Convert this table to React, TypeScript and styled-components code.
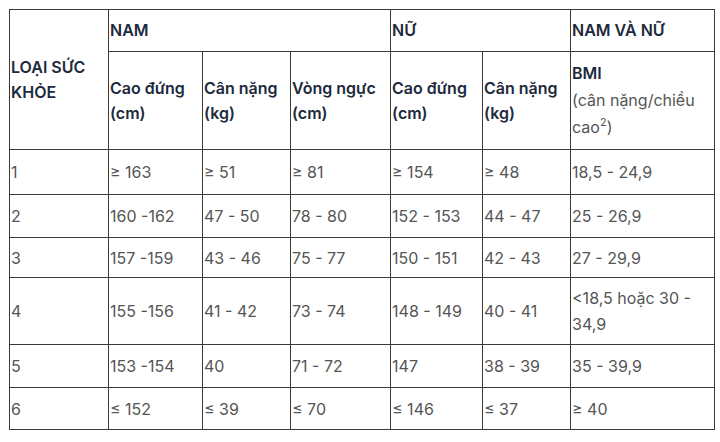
import React from "react";
import styled, { createGlobalStyle } from "styled-components";

const Global = createGlobalStyle`
  html, body { margin: 0; padding: 0; background: #ffffff; }
  body { font-family: Inter, "Noto Sans", sans-serif; }
`;

const Page = styled.div`
  padding: 9px 0 0 9px;
`;

const Table = styled.table`
  border-collapse: collapse;
  table-layout: fixed;
  width: 705px;
  font-family: Inter, "Noto Sans", sans-serif;
  font-size: 16px;
  color: #555555;
`;

const Row = styled.tr<{ $h: number }>`
  height: ${(p) => p.$h}px;
`;

const Cell = styled.td<{ $lh?: number }>`
  border: 1px solid #3a3a3a;
  padding: 0 2px 0 1px;
  vertical-align: middle;
  text-align: left;
  line-height: ${(p) => p.$lh ?? 25}px;
  font-weight: 400;
  color: #555555;
  overflow: hidden;
`;

const Head = styled(Cell).attrs({ as: "th" })`
  font-weight: 600;
  color: #1d2a3d;
`;

const Bold = styled.strong`
  font-weight: 600;
  color: #1d2a3d;
`;

const Sup = styled.sup`
  font-size: 11px;
  line-height: 0;
  vertical-align: 7px;
`;

const widths = [99, 94, 88, 100, 92, 88, 144];

const rows: { h: number; cells: React.ReactNode[] }[] = [
  { h: 45, cells: ["1", "≥ 163", "≥ 51", "≥ 81", "≥ 154", "≥ 48", "18,5 - 24,9"] },
  { h: 43, cells: ["2", "160 -162", "47 - 50", "78 - 80", "152 - 153", "44 - 47", "25 - 26,9"] },
  { h: 40, cells: ["3", "157 -159", "43 - 46", "75 - 77", "150 - 151", "42 - 43", "27 - 29,9"] },
  { h: 67, cells: ["4", "155 -156", "41 - 42", "73 - 74", "148 - 149", "40 - 41", "<18,5 hoặc 30 - 34,9"] },
  { h: 43, cells: ["5", "153 -154", "40", "71 - 72", "147", "38 - 39", "35 - 39,9"] },
  { h: 42, cells: ["6", "≤ 152", "≤ 39", "≤ 70", "≤ 146", "≤ 37", "≥ 40"] },
];

export default function App() {
  return (
    <>
      <Global />
      <Page>
        <Table>
          <colgroup>
            {widths.map((w, i) => (
              <col key={i} style={{ width: w }} />
            ))}
          </colgroup>
          <thead>
            <Row $h={42}>
              <Head rowSpan={2}>LOẠI SỨC KHỎE</Head>
              <Head colSpan={3}>NAM</Head>
              <Head colSpan={2}>NỮ</Head>
              <Head>NAM VÀ NỮ</Head>
            </Row>
            <Row $h={98}>
              <Head>Cao đứng (cm)</Head>
              <Head>Cân nặng (kg)</Head>
              <Head>Vòng ngực (cm)</Head>
              <Head>Cao đứng (cm)</Head>
              <Head>Cân nặng (kg)</Head>
              <Cell $lh={27}>
                <Bold>BMI</Bold>
                <br />
                (cân nặng/chiều cao<Sup>2</Sup>)
              </Cell>
            </Row>
          </thead>
          <tbody>
            {rows.map((r, i) => (
              <Row key={i} $h={r.h}>
                {r.cells.map((c, j) => (
                  <Cell key={j} $lh={26}>
                    {c}
                  </Cell>
                ))}
              </Row>
            ))}
          </tbody>
        </Table>
      </Page>
    </>
  );
}
